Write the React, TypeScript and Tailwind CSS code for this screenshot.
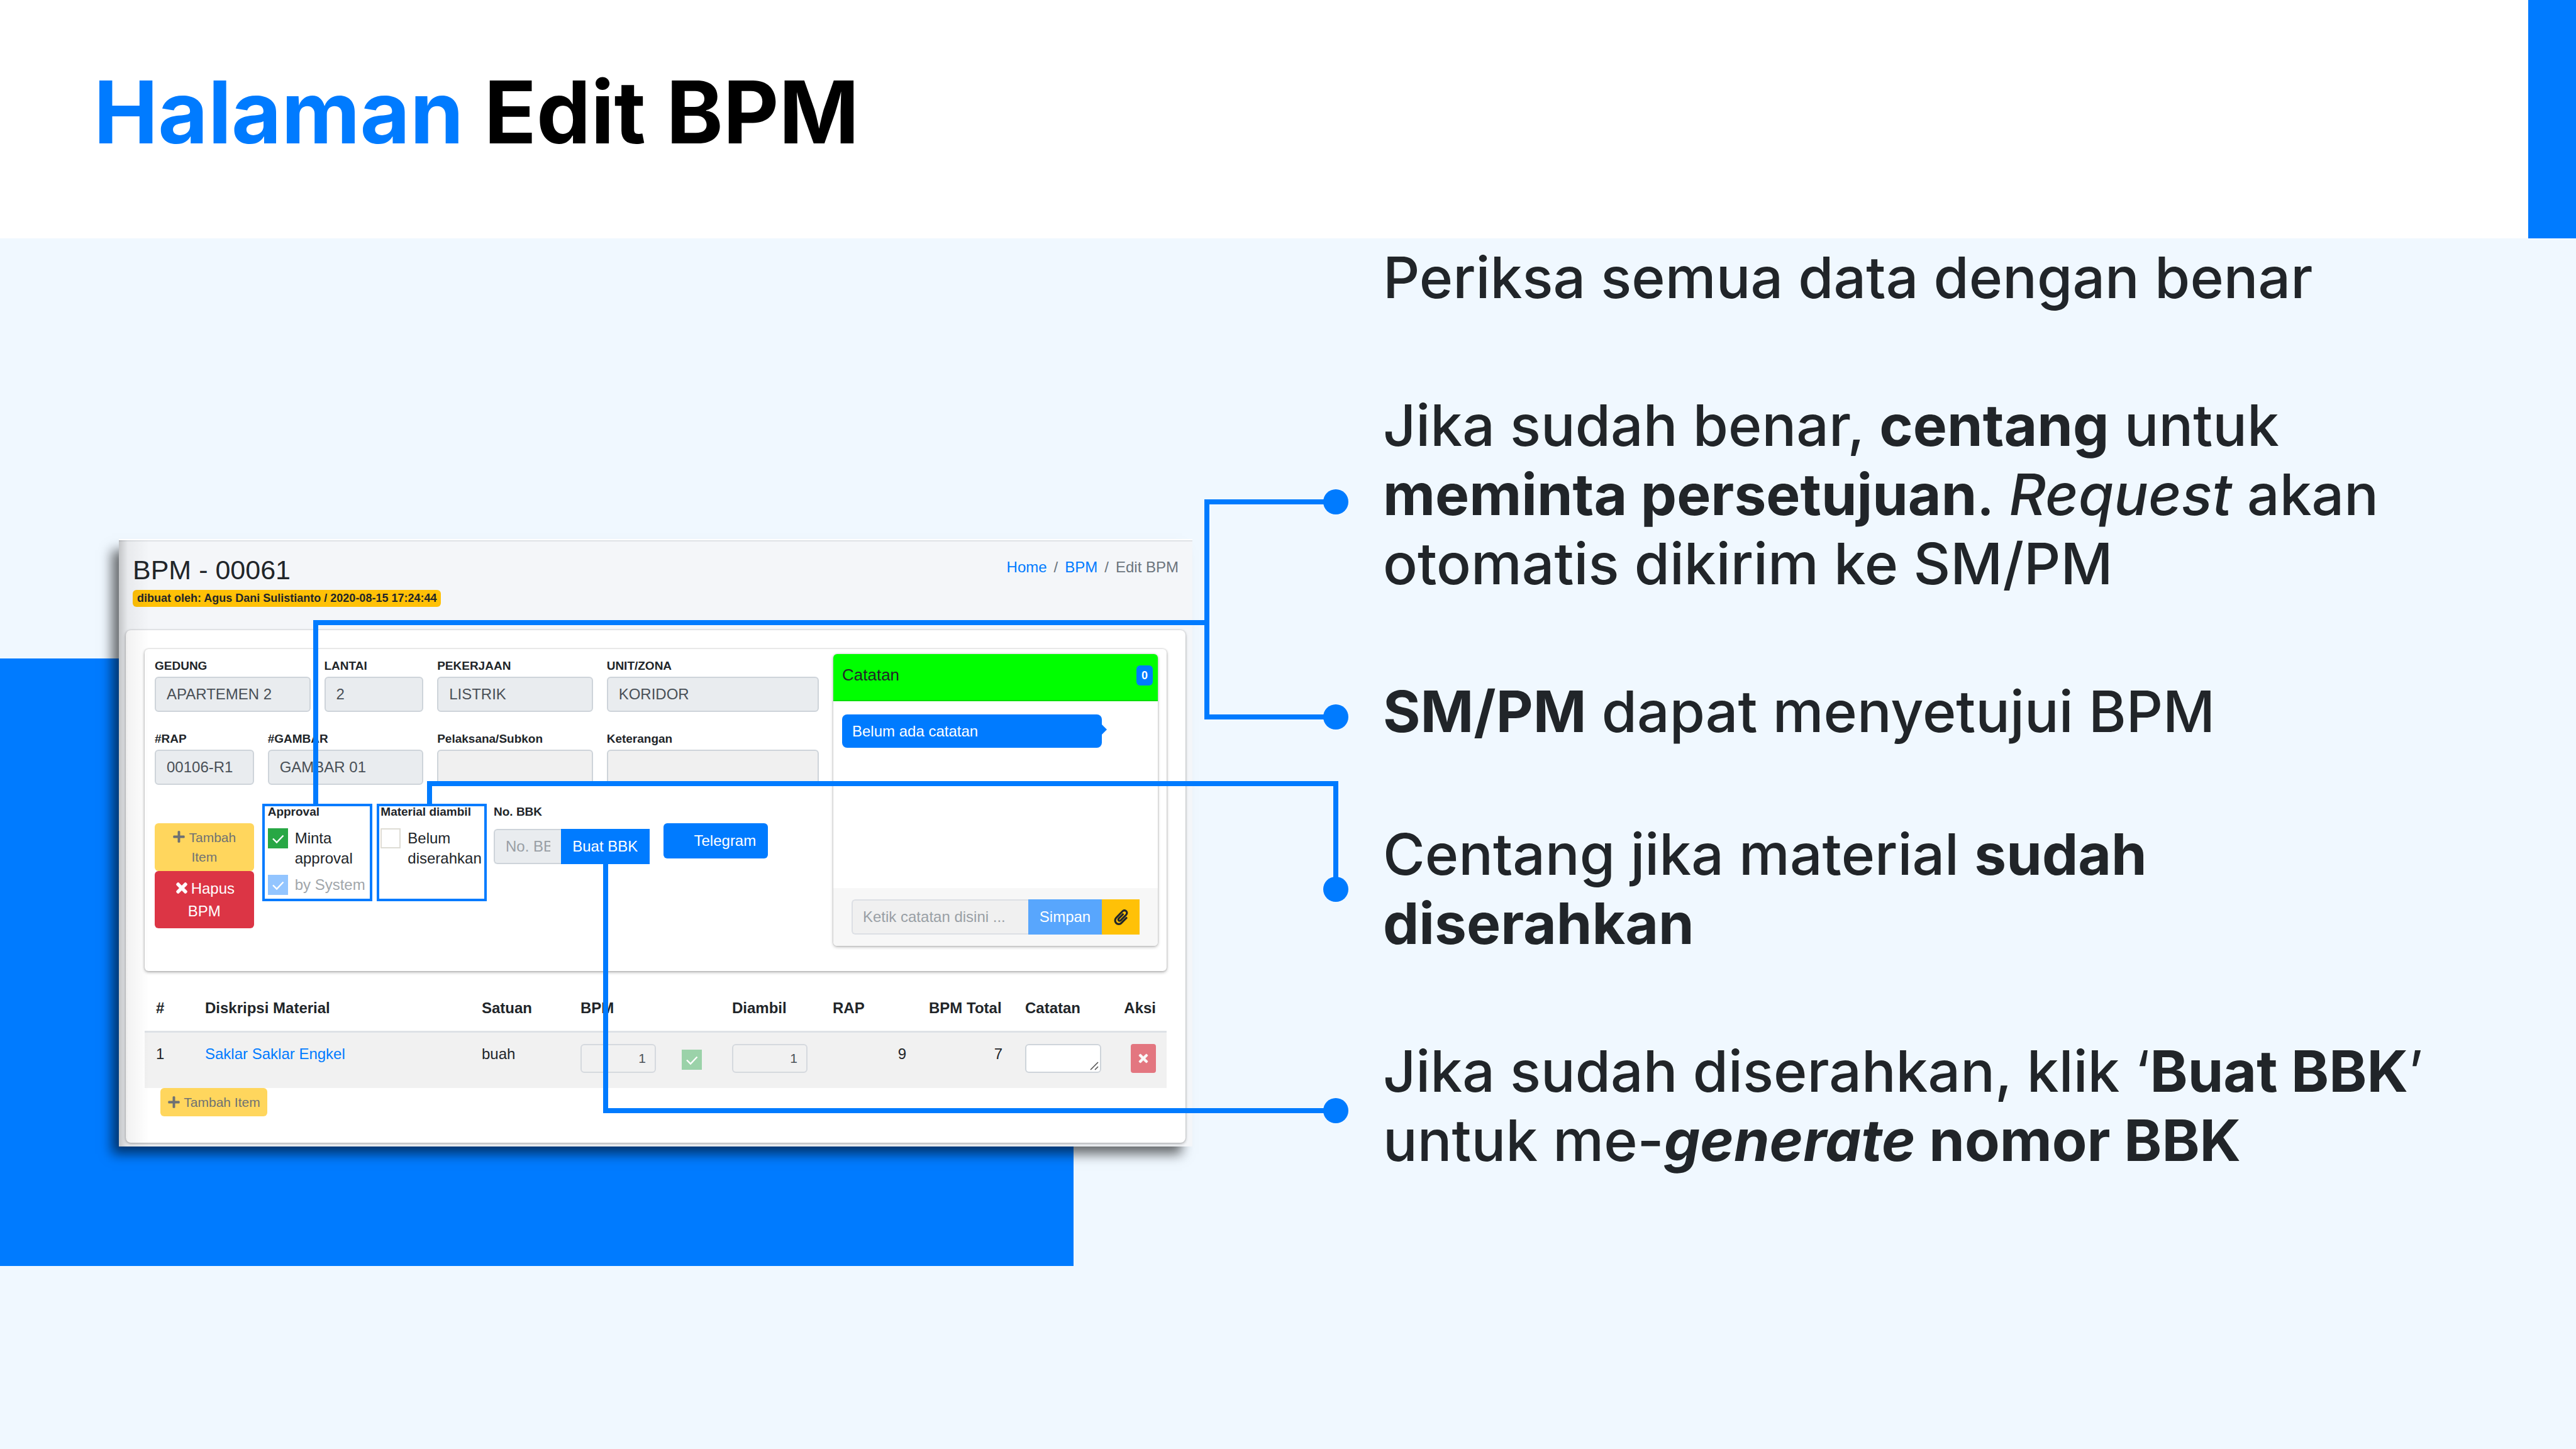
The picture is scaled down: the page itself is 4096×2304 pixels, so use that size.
import React from "react";
import { FaPaperclip, FaPlus, FaTimes } from "react-icons/fa";

type FieldProps = { id: string; label: string; value?: string; span: string; blank?: boolean };

const labelClass = "block whitespace-nowrap text-[19px] leading-[30px] font-bold";

function Field({ id, label, value = "", span, blank = false }: FieldProps) {
  return (
    <div className={span}>
      <label htmlFor={id} className={labelClass}>
        {label}
      </label>
      <input
        id={id}
        readOnly
        value={value}
        className={`mt-[2px] block h-14 w-full rounded-md border-2 border-[#ced4da] px-[17px] text-2xl text-[#495057] ${
          blank ? "bg-[#f0f0f0]" : "bg-[#e9ecef]"
        }`}
      />
    </div>
  );
}

type TickProps = { id: string; checked?: boolean; tone: string; label?: string; name?: string; muted?: boolean };

function Tick({ id, checked = false, tone, label, name, muted = false }: TickProps) {
  return (
    <div className="flex items-start gap-[11px]">
      <span className="relative block size-8 shrink-0">
        <input
          id={id}
          type="checkbox"
          defaultChecked={checked}
          disabled={muted}
          aria-label={name}
          className={`block size-8 appearance-none ${tone}`}
        />
        {checked && (
          <svg viewBox="0 0 32 32" className="pointer-events-none absolute inset-0 size-8" aria-hidden="true">
            <path d="M8 16.5 L14 22.5 L24.5 11.5" fill="none" stroke="white" strokeWidth="2.4" />
          </svg>
        )}
      </span>
      {label && (
        <label htmlFor={id} className={`text-2xl leading-8 ${muted ? "whitespace-nowrap text-[#a1a6ab]" : ""}`}>
          {label}
        </label>
      )}
    </div>
  );
}

function Notes() {
  return (
    <section className="flex w-[516px] shrink-0 flex-col overflow-hidden rounded-md bg-white shadow-[0_0_3px_rgba(0,0,0,0.2),0_2px_5px_rgba(0,0,0,0.25)]">
      <header className="flex h-[75px] items-center justify-between border-b-2 border-[#00dd00] bg-[#00ff00] pr-2 pb-[6px] pl-[14px]">
        <h2 className="text-[26px]">Catatan</h2>
        <span className="grid h-8 w-[26px] place-items-center rounded-md bg-[#007bff] text-lg font-bold text-white">
          0
        </span>
      </header>
      <div className="h-[297px] px-[14px] pt-[21px]">
        <p className="relative flex h-[53px] w-[413px] items-center rounded-lg bg-[#007bff] pl-4 text-2xl text-white">
          Belum ada catatan
          <span className="absolute top-4 left-full border-y-8 border-l-8 border-y-transparent border-l-[#007bff]" />
        </p>
      </div>
      <form className="flex h-[92px] bg-[#f7f7f7] px-[29px] py-[18px]">
        <input
          aria-label="Catatan baru"
          placeholder="Ketik catatan disini ..."
          className="h-14 w-[281px] rounded-l-md border-2 border-r-0 border-[#dcdfe4] bg-[#f0f0f0] px-4 text-2xl placeholder:text-[#999fa5]"
        />
        <button type="button" className="h-14 w-[117px] bg-[#58a6fd] text-2xl text-white">
          Simpan
        </button>
        <button
          type="button"
          aria-label="Lampirkan berkas"
          className="grid h-14 w-[60px] place-items-center bg-[#ffc107] text-[#212529]"
        >
          <FaPaperclip size={25} />
        </button>
      </form>
    </section>
  );
}

function MaterialTable() {
  const head = "h-[72px] px-[18px] font-bold whitespace-nowrap";
  const cell = "px-[18px] pt-[18px] align-top leading-8";
  const amount =
    "block h-[46px] w-full max-w-[120px] rounded-md border-2 border-[#d5d9de] bg-transparent px-[14px] text-right text-[21px] text-[#495057]";
  return (
    <table className="mt-6 w-full table-fixed text-left text-2xl">
      <colgroup>
        <col className="w-[78px]" />
        <col />
        <col className="w-[157px]" />
        <col className="w-[160px]" />
        <col className="w-[81px]" />
        <col className="w-[160px]" />
        <col className="w-[153px]" />
        <col className="w-[153px]" />
        <col className="w-[157px]" />
        <col className="w-[86px]" />
      </colgroup>
      <thead>
        <tr className="border-b-3 border-[#dee2e6]">
          <th className={head}>#</th>
          <th className={head}>Diskripsi Material</th>
          <th className={head}>Satuan</th>
          <th className={head}>BPM</th>
          <th className={head} aria-label="Disetujui" />
          <th className={head}>Diambil</th>
          <th className={head}>RAP</th>
          <th className={head}>BPM Total</th>
          <th className={head}>Catatan</th>
          <th className="h-[72px] pr-[17px] text-right font-bold">Aksi</th>
        </tr>
      </thead>
      <tbody>
        <tr className="h-[90px] bg-[#f1f1f1]">
          <td className={cell}>1</td>
          <td className={cell}>
            <a href="#material" className="text-[#007bff]">
              Saklar Saklar Engkel
            </a>
          </td>
          <td className={cell}>buah</td>
          <td className={cell}>
            <input aria-label="Jumlah BPM" readOnly value="1" className={amount} />
          </td>
          <td className="px-[19px] pt-[27px] align-top">
            <Tick id="row-ok" checked muted tone="bg-[#9bd2a9]" name="Disetujui" />
          </td>
          <td className={cell}>
            <input aria-label="Jumlah diambil" readOnly value="1" className={amount} />
          </td>
          <td className={`${cell} text-right`}>9</td>
          <td className={`${cell} text-right`}>7</td>
          <td className={cell}>
            <span className="relative block h-[46px]">
              <textarea
                aria-label="Catatan material"
                className="block h-[46px] w-full resize-none rounded-md border-2 border-[#ced4da] bg-white"
              />
              <svg viewBox="0 0 14 14" className="pointer-events-none absolute right-1 bottom-1 size-[14px]" aria-hidden="true">
                <path d="M1 13 L13 1 M8 13 L13 8" stroke="#555" strokeWidth="1.6" />
              </svg>
            </span>
          </td>
          <td className="pt-[18px] pr-[17px] align-top">
            <button
              type="button"
              aria-label="Hapus baris"
              className="ml-auto grid h-[46px] w-10 place-items-center rounded-sm bg-[#dc3545] text-white opacity-65"
            >
              <FaTimes size={20} className="stroke-current stroke-[24]" />
            </button>
          </td>
        </tr>
      </tbody>
    </table>
  );
}

function EditPanel() {
  return (
    <section className="relative w-[1707px] shrink-0 border-t-2 border-white bg-[#f4f6f9] pb-[6px] font-['Liberation_Sans',Arial,sans-serif] text-[#212529] shadow-[-14px_15px_18px_-3px_rgba(0,0,0,0.58)]">
      <div className="flex items-start justify-between border-t-2 border-[#dfe2e6] px-[22px] pb-[37px]">
        <div className="pt-5">
          <h2 className="text-[43px] leading-[50px]">BPM - 00061</h2>
          <p className="mt-[7px] rounded-md bg-[#ffc107] px-[7px] text-lg leading-[27px] font-bold">
            dibuat oleh: Agus Dani Sulistianto / 2020-08-15 17:24:44
          </p>
        </div>
        <nav className="flex gap-[11px] pt-[23px] text-2xl leading-9 text-[#6c757d]">
          <a href="#home" className="text-[#007bff]">
            Home
          </a>
          <span>/</span>
          <a href="#bpm" className="text-[#007bff]">
            BPM
          </a>
          <span>/</span>
          <span>Edit BPM</span>
        </nav>
      </div>

      <div className="mx-[11px] rounded-lg bg-white px-[30px] pt-[30px] pb-[42px] shadow-[0_0_3px_rgba(0,0,0,0.2),0_2px_5px_rgba(0,0,0,0.25)]">
        <div className="flex gap-[23px] rounded-md bg-white pt-2 pr-[14px] pb-10 pl-4 shadow-[0_0_3px_rgba(0,0,0,0.2),0_2px_5px_rgba(0,0,0,0.3)]">
          <div className="flex-1 pt-1">
            <div className="mb-7 grid grid-cols-12 gap-x-[22px]">
              <Field id="gedung" label="GEDUNG" value="APARTEMEN 2" span="col-span-3" />
              <Field id="lantai" label="LANTAI" value="2" span="col-span-2" />
              <Field id="pekerjaan" label="PEKERJAAN" value="LISTRIK" span="col-span-3" />
              <Field id="unit" label="UNIT/ZONA" value="KORIDOR" span="col-span-4" />
            </div>
            <div className="mb-7 grid grid-cols-12 gap-x-[22px]">
              <Field id="rap" label="#RAP" value="00106-R1" span="col-span-2" />
              <Field id="gambar" label="#GAMBAR" value="GAMBAR 01" span="col-span-3" />
              <Field id="pelaksana" label="Pelaksana/Subkon" blank span="col-span-3" />
              <Field id="keterangan" label="Keterangan" blank span="col-span-4" />
            </div>
            <div className="grid grid-cols-12 items-start gap-x-[22px]">
              <div className="col-span-2 flex flex-col pt-[33px]">
                <button
                  type="button"
                  className="h-[76px] rounded-md bg-[#ffc107] px-6 text-[21px] leading-[31px] opacity-65"
                >
                  <FaPlus size={21} className="mr-[5px] inline align-[-2px]" />
                  Tambah Item
                </button>
                <button
                  type="button"
                  className="h-[91px] rounded-md bg-[#dc3545] px-5 text-2xl leading-9 text-white"
                >
                  <FaTimes size={24} className="mr-[3px] inline align-[-3px] stroke-current stroke-[24]" />
                  Hapus BPM
                </button>
              </div>
              <div className="col-span-2">
                <h3 className={labelClass}>Approval</h3>
                <div className="mt-[11px] flex flex-col gap-[10px]">
                  <Tick id="minta" checked tone="bg-[#28a745]" label="Minta approval" />
                  <Tick id="system" checked muted tone="bg-[#93c5ff]" label="by System" />
                </div>
              </div>
              <div className="col-span-2">
                <h3 className={labelClass}>Material diambil</h3>
                <div className="mt-[11px]">
                  <Tick id="belum" tone="border-2 border-[#dedcd5] bg-white" label="Belum diserahkan" />
                </div>
              </div>
              <div className="col-span-3">
                <label htmlFor="bbk" className={labelClass}>
                  No. BBK
                </label>
                <div className="mt-3 flex">
                  <input
                    id="bbk"
                    placeholder="No. BBK"
                    className="h-14 w-[107px] rounded-l-md border-2 border-r-0 border-[#ced4da] bg-[#e9ecef] px-[17px] text-2xl placeholder:text-[#999fa5]"
                  />
                  <button type="button" className="h-14 flex-1 bg-[#007bff] text-2xl text-white">
                    Buat BBK
                  </button>
                </div>
              </div>
              <div className="col-span-3 pt-[33px]">
                <button type="button" className="h-14 rounded-md bg-[#007bff] pr-[19px] pl-[49px] text-2xl text-white">
                  Telegram
                </button>
              </div>
            </div>
          </div>
          <Notes />
        </div>

        <MaterialTable />
        <button
          type="button"
          className="ml-[25px] flex h-[45px] w-[170px] items-center justify-center gap-[5px] rounded-md bg-[#ffc107] text-[21px] opacity-65"
        >
          <FaPlus size={21} />
          Tambah Item
        </button>
      </div>
      <div className="pointer-events-none absolute inset-y-0 left-0 w-12 bg-linear-to-r from-black/20 via-black/5 via-30% to-transparent" />
    </section>
  );
}

function Callouts() {
  return (
    <svg className="pointer-events-none absolute top-0 left-0 h-[2304px] w-[2200px]" viewBox="0 0 2200 2304" aria-hidden="true">
      <g fill="none" stroke="#007bff" strokeWidth="8">
        <path d="M502 1280 V990 H1919" />
        <path d="M2124 798 H1919 V1140 H2124" />
        <path d="M683 1280 V1246 H2124 V1414" />
        <path d="M963 1374 V1766 H2124" />
      </g>
      <g fill="none" stroke="#007bff" strokeWidth="4">
        <rect x="419" y="1280" width="171" height="151" />
        <rect x="601" y="1280" width="171" height="151" />
      </g>
      <g fill="#007bff">
        <circle cx="2124" cy="798" r="20" />
        <circle cx="2124" cy="1140" r="20" />
        <circle cx="2124" cy="1414" r="20" />
        <circle cx="2124" cy="1766" r="20" />
      </g>
    </svg>
  );
}

export default function App() {
  return (
    <div className="relative flex min-h-screen w-full flex-col bg-[#f0f8ff] font-['Inter',sans-serif]">
      <header className="flex h-[379px] justify-between bg-white">
        <h1 className="pt-[95px] pl-[149px] text-[137px] leading-[166px] font-bold text-black">
          <span className="text-[#007bff]">Halaman</span> Edit BPM
        </h1>
        <div className="w-[76px] bg-[#007bff]" />
      </header>
      <main className="relative flex flex-1 items-start">
        <div className="absolute top-[668px] left-0 h-[966px] w-[1707px] bg-[#007bff]" />
        <div className="pt-[478px] pl-[189px]">
          <EditPanel />
        </div>
        <div className="flex flex-1 flex-col gap-[117px] pt-[7px] pr-[180px] pl-[303px] text-[91px] leading-[110px] font-medium text-[#212529]">
          <div className="flex flex-col gap-[125px]">
            <p>Periksa semua data dengan benar</p>
            <p>
              Jika sudah benar, <strong>centang</strong> untuk <strong>meminta persetujuan</strong>. <em>Request</em>{" "}
              akan otomatis dikirim ke SM/PM
            </p>
            <p>
              <strong>SM/PM</strong> dapat menyetujui BPM
            </p>
          </div>
          <div className="flex flex-col gap-[125px]">
            <p>
              Centang jika material <strong>sudah diserahkan</strong>
            </p>
            <p>
              Jika sudah diserahkan, klik <span className="font-normal">‘</span>
              <strong>Buat BBK</strong>
              <span className="font-normal">’</span> untuk me-
              <strong>
                <em>generate</em> nomor BBK
              </strong>
            </p>
          </div>
        </div>
      </main>
      <Callouts />
    </div>
  );
}
